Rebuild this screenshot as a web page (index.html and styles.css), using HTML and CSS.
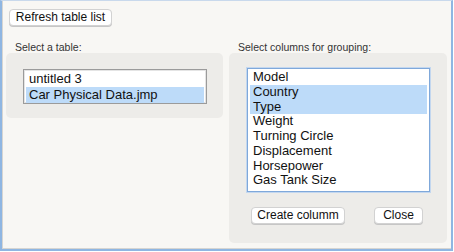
FILE: index.html
```html
<!DOCTYPE html>
<html lang="en">
<head>
  <meta charset="UTF-8" />
  <title>Group columns</title>
  <link rel="stylesheet" href="styles.css">
</head>
<body>
  <div class="window">
    <div class="toolbar">
      <button class="btn refresh-btn">Refresh table list</button>
    </div>

    <div class="columns">
      <section class="col">
        <label class="col-label">Select a table:</label>
        <div class="panel panel-tables">
          <ul class="listbox tables-list">
            <li>untitled 3</li>
            <li class="selected">Car Physical Data.jmp</li>
          </ul>
        </div>
      </section>

      <section class="col">
        <label class="col-label">Select columns for grouping:</label>
        <div class="panel panel-columns">
          <ul class="listbox columns-list">
            <li>Model</li>
            <li class="selected">Country</li>
            <li class="selected">Type</li>
            <li>Weight</li>
            <li>Turning Circle</li>
            <li>Displacement</li>
            <li>Horsepower</li>
            <li>Gas Tank Size</li>
          </ul>
          <div class="actions">
            <button class="btn create-btn">Create columm</button>
            <button class="btn close-btn">Close</button>
          </div>
        </div>
      </section>
    </div>
  </div>
</body>
</html>
```

FILE: styles.css
```css
:root {
  --bg: #f8f7f4;
  --panel: #edece9;
  --frame: #8fb6e2;
  --select: #bddbf9;
  --text: #111;
  --label: #333;
}

* {
  margin: 0;
  padding: 0;
  box-sizing: border-box;
}

body {
  font-family: 'Liberation Sans', Arial, sans-serif;
  background-color: #fff;
  color: var(--text);
  width: 454px;
  height: 252px;
  overflow: hidden;
}

.window {
  width: 453px;
  height: 251px;
  background-color: var(--bg);
  border: 2px solid var(--frame);
  border-top: 1px solid #c9d9ec;
  padding: 6px 4px 0 4px;
  box-shadow: inset 1px -1px 0 #d6d5d2;
}

.toolbar {
  padding-left: 3px;
  height: 35px;
}

.btn {
  font-family: inherit;
  background-color: #fff;
  color: #111;
  border: 1px solid #d2d2d2;
  border-radius: 4px;
  box-shadow: 0 1px 0 #c6c6c6;
  cursor: pointer;
}

.refresh-btn {
  font-size: 12px;
  width: 103px;
  height: 17px;
  line-height: 15px;
}

.columns {
  display: grid;
  grid-template-columns: 217px 218px;
  gap: 6px;
}

.col-label {
  display: block;
  font-size: 10.5px;
  color: var(--label);
  padding-left: 9px;
  height: 11px;
  line-height: 11px;
}

.panel {
  background-color: var(--panel);
  border-radius: 5px;
}

.panel-tables {
  height: 65px;
  padding: 16px 0 0 17px;
}

.panel-columns {
  height: 190px;
  padding: 15px 0 0 18px;
}

.listbox {
  list-style: none;
  background-color: #fff;
  font-size: 13px;
  padding: 1px 2px;
}

.listbox li {
  padding-left: 3px;
  white-space: nowrap;
}

.listbox li.selected {
  background-color: var(--select);
}

.tables-list {
  width: 184px;
  height: 35px;
  border: 1px solid #9b9b9b;
  box-shadow: inset 0 0 0 1px #e4e4e4;
}

.tables-list li {
  height: 16px;
  line-height: 16px;
}

.columns-list {
  width: 183px;
  height: 124px;
  border: 1px solid #7fa8da;
  box-shadow: 0 0 0 1px #c3d7ef;
}

.columns-list li {
  height: 14.75px;
  line-height: 14.75px;
}

.actions {
  display: flex;
  justify-content: space-between;
  width: 172px;
  margin: 15px 0 0 4px;
}

.create-btn,
.close-btn {
  font-size: 12px;
  height: 17px;
  line-height: 15px;
}

.create-btn {
  width: 94px;
}

.close-btn {
  width: 49px;
}
```
